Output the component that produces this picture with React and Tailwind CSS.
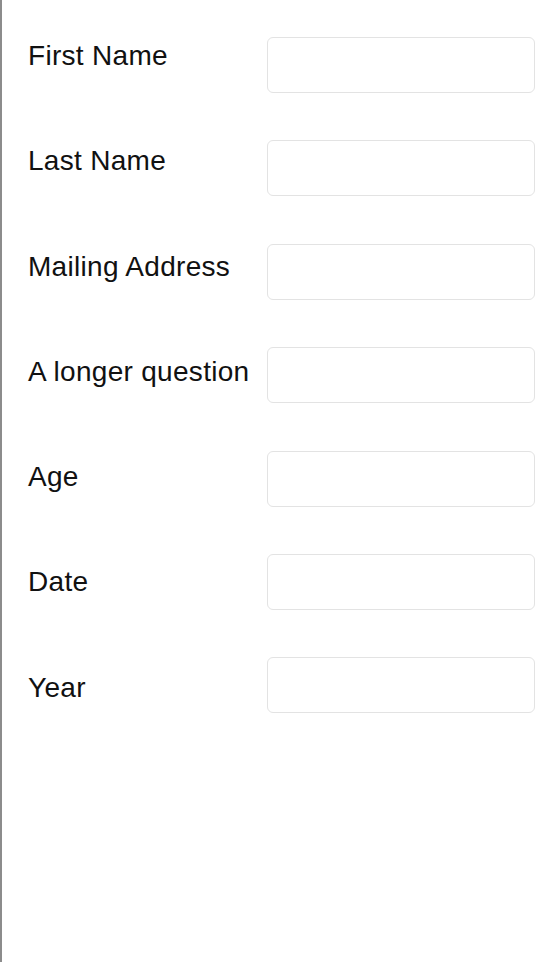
const fields = ['First Name', 'Last Name', 'Mailing Address', 'A longer question', 'Age', 'Date', 'Year'];

export default function App() {
    return (
        <div className="min-h-screen bg-white border-l-2 border-[#8c8c8c] font-['Liberation_Sans',Arial,sans-serif]">
            <form className="flex items-start pt-[37px] pl-[26px] pr-[19px]">
                {/* Labels */}
                <div className="w-[239px] flex flex-col gap-[73.3px] pt-[3px]">
                    {fields.map((label) => (
                        <label key={label} className="text-[28px] leading-[32px] tracking-[0.3px] text-[#111] whitespace-nowrap">
                            {label}
                        </label>
                    ))}
                </div>

                {/* Inputs */}
                <div className="flex-1 flex flex-col gap-[47.4px]">
                    {fields.map((label) => (
                        <input
                            key={label}
                            type="text"
                            aria-label={label}
                            className="w-full h-[56px] rounded-[6px] border border-[#e3e3e3] bg-white focus:outline-none"
                        />
                    ))}
                </div>
            </form>
        </div>
    );
}
